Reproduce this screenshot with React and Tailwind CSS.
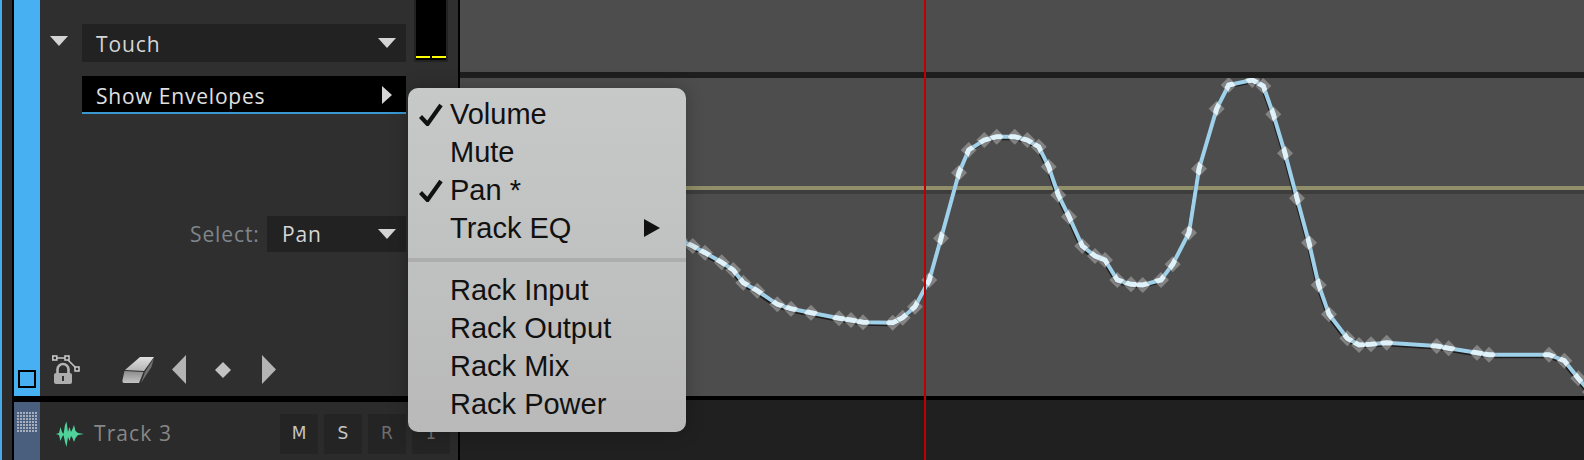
const uiFont = "font-['Open_Sans','Noto_Sans',sans-serif]";

// envelope points, in page pixels
const envelopePoints = [
    [680, 240], [692.7, 246], [705, 252.7], [721.7, 262.3], [733.3, 270], [743.3, 282.7], [757.3, 290.7],
    [777.3, 304.3], [791, 308.7], [811, 312.7], [839, 318.3], [851, 320], [863, 322.3], [892.7, 322.7],
    [902.7, 317.7], [915, 306.7], [929.3, 280], [941, 238.3], [959, 172.7], [968.7, 150], [984.3, 140],
    [996.7, 136.7], [1014.7, 136.7], [1027.3, 140], [1038.7, 146.7], [1048.7, 166.7], [1058.3, 195],
    [1069, 216.7], [1082.3, 246], [1095, 256], [1105, 260], [1117.3, 280], [1131, 284.3], [1142.7, 285],
    [1161, 280], [1172.7, 264.3], [1189, 232.7], [1199, 168.7], [1216.7, 108.7], [1228.7, 85], [1252.3, 80],
    [1263.3, 86], [1273.3, 114.3], [1285, 153.3], [1297, 198.3], [1309, 242.7], [1318.7, 285], [1329, 314.3],
    [1347.3, 338.3], [1359, 345], [1371, 344.3], [1386.7, 342.7], [1436.7, 346], [1448.7, 348.3], [1477, 352.7],
    [1489, 354.7], [1549, 354.7], [1564.3, 360.7], [1578.3, 378.3], [1590, 392],
];

const line = envelopePoints.map((p) => p.join(",")).join(" ");
const diamond = ([x, y], r) => `${x - r},${y} ${x},${y - r} ${x + r},${y} ${x},${y + r}`;

function Envelope() {
    return (
        <svg viewBox="460 78 1124 318" className="absolute inset-0 w-full h-full">
            <defs>
                <clipPath id="inner">
                    {envelopePoints.map((p, i) => (
                        <polygon key={i} points={diamond(p, 7)} />
                    ))}
                </clipPath>
            </defs>
            <rect x="460" y="186" width="1124" height="4" fill="#908f69" />
            <rect x="460" y="190" width="1124" height="4" fill="#3d3d3d" />
            <polyline points={line} transform="translate(-1 2)" fill="none" stroke="#1d1d1d" strokeWidth="3" />
            <polyline points={line} fill="none" stroke="#9fd1ea" strokeWidth="4" />
            {envelopePoints.map((p, i) => (
                <polygon key={i} points={diamond(p, 8)} fill="#a8a8a8" fillOpacity="0.6" />
            ))}
            <polyline points={line} clipPath="url(#inner)" fill="none" stroke="#dff1f9" strokeWidth="5" />
        </svg>
    );
}

function TriDown({ className = "" }) {
    return (
        <svg viewBox="0 0 18 10" className={"w-[18px] h-[10px] " + className}>
            <polygon points="0,0 18,0 9,10" fill="#d4d4d4" />
        </svg>
    );
}

function MenuRow({ label, checked, sub }) {
    return (
        <div className="flex items-center h-[38px] relative pl-[42px]">
            {checked && (
                <svg viewBox="0 0 24 23" className="absolute left-[11px] top-[8px] w-[24px] h-[23px]">
                    <path d="M1.5 13.5 L8.5 21 L22 2" fill="none" stroke="#111" strokeWidth="4.2" />
                </svg>
            )}
            <span>{label}</span>
            {sub && (
                <svg viewBox="0 0 16 18" className="absolute left-[236px] top-[10px] w-[16px] h-[18px]">
                    <polygon points="0,0 16,9 0,18" fill="#111" />
                </svg>
            )}
        </div>
    );
}

function PopupMenu() {
    return (
        <div className="absolute left-[408px] top-[88px] w-[278px] h-[344px] rounded-[10px] bg-gradient-to-b from-[#c7c9c9] to-[#b9b9b9] shadow-[0_0_18px_rgba(0,0,0,0.25)] pt-[7px] text-[#111] text-[29px] font-['Liberation_Sans',sans-serif] leading-none">
            <MenuRow label="Volume" checked />
            <MenuRow label="Mute" />
            <MenuRow label="Pan *" checked />
            <MenuRow label="Track EQ" sub />
            <div className="h-[4px] bg-[#adadad] mt-[11px] mb-[9px]" />
            <MenuRow label="Rack Input" />
            <MenuRow label="Rack Output" />
            <MenuRow label="Rack Mix" />
            <MenuRow label="Rack Power" />
        </div>
    );
}

function LockIcon() {
    return (
        <svg viewBox="52 355 28 29" className="w-[28px] h-[29px]">
            <path d="M56 358 H66 L76 368" fill="none" stroke="#c4c4c4" strokeWidth="1.5" />
            <g fill="#2f2f2f" stroke="#c4c4c4" strokeWidth="1.6">
                <rect x="52.8" y="356" width="4" height="4" />
                <rect x="65" y="356" width="4" height="4" />
                <rect x="75" y="367" width="4" height="4" />
            </g>
            <path d="M57.5 374 V369.5 A5.5 5.5 0 0 1 68.5 369.5 V374" fill="none" stroke="#b4b4b4" strokeWidth="2.6" />
            <rect x="54" y="373" width="18" height="11" rx="2" fill="#adadad" />
            <rect x="62" y="376" width="2" height="5" fill="#333" />
        </svg>
    );
}

function EraserIcon() {
    return (
        <svg viewBox="122 357 32 27" className="w-[32px] h-[27px]">
            <defs>
                <linearGradient id="eraserTop" x1="0" y1="0" x2="0" y2="1">
                    <stop offset="0" stopColor="#e0e0e0" />
                    <stop offset="1" stopColor="#b4b4b4" />
                </linearGradient>
                <linearGradient id="eraserFront" x1="0" y1="0" x2="0" y2="1">
                    <stop offset="0" stopColor="#8c8c8c" />
                    <stop offset="1" stopColor="#c4c4c4" />
                </linearGradient>
            </defs>
            <polygon points="125,371 140,358 154,358 144,372" fill="url(#eraserTop)" />
            <path d="M124.5 372 L143.5 373 L139 384 H124 Q122 384 122.5 381 Z" fill="url(#eraserFront)" />
            <polygon points="145,373 154,359 151.5,368 141,384" fill="#6f6f6f" />
        </svg>
    );
}

function Stepper() {
    return (
        <div className="flex items-center">
            <svg viewBox="0 0 14 29" className="w-[14px] h-[29px] ml-[18px]">
                <polygon points="14,0 14,29 0,14.5" fill="#b4b4b4" />
            </svg>
            <svg viewBox="0 0 16 16" className="w-[16px] h-[16px] ml-[29px]">
                <polygon points="8,0 16,8 8,16 0,8" fill="#c2c2c2" />
            </svg>
            <svg viewBox="0 0 14 29" className="w-[14px] h-[29px] ml-[31px]">
                <polygon points="0,0 14,14.5 0,29" fill="#b4b4b4" />
            </svg>
        </div>
    );
}

function WaveIcon() {
    return (
        <svg viewBox="56 420 28 26" className="w-[28px] h-[26px]">
            <path
                d="M56 433 L59 432 L60.5 426 L62 431 L63.5 433 L65 424 L66.5 420.5 L68 431 L69.5 426 L71 431 L72.5 428 L74 424 L75.5 430 L78 432 L84 433 L78 434 L75.5 437 L74 441 L72.5 437 L71 435 L69.5 440 L68 436 L66.5 446 L65 441 L63.5 434 L62 436 L60.5 440 L59 434 Z"
                fill="#4fd39b"
            />
        </svg>
    );
}

function TrackButton({ label, className }) {
    return (
        <div className={"w-[38px] h-[40px] bg-[#242424] flex items-center justify-center text-[17px] " + className}>
            {label}
        </div>
    );
}

export default function App() {
    return (
        <div className="relative flex w-[1584px] h-[460px] overflow-hidden bg-[#222]">
            <div className="w-[2px] bg-[#45aaea]" />
            <div className="w-[10px] bg-[#2b2b2b]" />
            <div className="w-[2px] bg-black" />

            {/* track headers */}
            <div className="w-[444px] flex flex-col">
                <div className="h-[396px] flex">
                    <div className="w-[26px] bg-[#47b0f2] flex items-end pb-[8px] pl-[4px]">
                        <div className="w-[18px] h-[18px] border-2 border-black" />
                    </div>
                    <div className={"flex-1 bg-[#2f2f2f] flex flex-col text-[#d6d6d6] text-[21px] tracking-[0.9px] " + uiFont}>
                        <div className="flex items-end h-[62px]">
                            <div className="w-[42px] h-[38px] flex items-center pl-[10px] pb-[4px]">
                                <TriDown />
                            </div>
                            <div className="w-[324px] h-[38px] bg-[#222] flex items-center justify-between pl-[14px] pr-[10px]">
                                <span className="pt-[3px]">Touch</span>
                                <TriDown />
                            </div>
                            <div className="ml-[8px] w-[34px] h-[62px] bg-[#222] px-[2px] pb-[2px] flex flex-col">
                                <div className="flex-1 bg-black flex items-end gap-[2px] pb-[2px]">
                                    <div className="flex-1 h-[2px] bg-[#ffff00]" />
                                    <div className="flex-1 h-[2px] bg-[#ffff00]" />
                                </div>
                            </div>
                        </div>
                        <div className="ml-[42px] mt-[14px] w-[324px] h-[38px] bg-black border-b-2 border-[#3a97cf] flex items-center justify-between pl-[14px] pr-[14px] text-[#e0e0e0]">
                            <span className="pt-[5px] tracking-[0.8px]">Show Envelopes</span>
                            <svg viewBox="0 0 10 18" className="w-[10px] h-[18px] mt-[1px]">
                                <polygon points="0,0 10,9 0,18" fill="#d4d4d4" />
                            </svg>
                        </div>
                        <div className="mt-[102px] ml-[150px] flex items-center h-[36px]">
                            <span className="w-[77px] pt-[1px] text-[#7f868c]">Select:</span>
                            <div className="w-[139px] h-[36px] bg-[#222] flex items-center justify-between pl-[15px] pr-[10px]">
                                <span className="pt-[1px]">Pan</span>
                                <TriDown />
                            </div>
                        </div>
                        <div className="mt-[103px] ml-[12px] flex items-center">
                            <LockIcon />
                            <div className="ml-[42px]">
                                <EraserIcon />
                            </div>
                            <Stepper />
                        </div>
                    </div>
                </div>
                <div className="h-[6px] bg-black" />
                <div className="flex-1 flex">
                    <div className="w-[26px] bg-[#4a5f7d] pl-[3px] pt-[10px]">
                        <svg width="20" height="21">
                            <defs>
                                <pattern id="dots" width="3" height="3" patternUnits="userSpaceOnUse">
                                    <rect width="2" height="2" fill="#a7afbf" />
                                </pattern>
                            </defs>
                            <rect width="20" height="21" fill="url(#dots)" />
                        </svg>
                    </div>
                    <div className="flex-1 bg-[#2b2b2b] flex items-center pl-[16px] pt-[6px]">
                        <WaveIcon />
                        <span className={"ml-[10px] w-[186px] text-[21px] tracking-[1.1px] text-[#878787] " + uiFont}>Track 3</span>
                        <div className="flex gap-[6px]">
                            <TrackButton label="M" className="font-['DejaVu_Sans',sans-serif] text-[#c4c4c4]" />
                            <TrackButton label="S" className="font-['DejaVu_Sans',sans-serif] text-[#c4c4c4]" />
                            <TrackButton label="R" className="font-['DejaVu_Sans',sans-serif] text-[#6e6e6e]" />
                            <TrackButton label="I" className="font-['DejaVu_Sans_Mono',monospace] text-[#6e6e6e]" />
                        </div>
                    </div>
                </div>
            </div>

            <div className="w-[2px] bg-black" />

            {/* lanes */}
            <div className="flex-1 flex flex-col">
                <div className="h-[72px] bg-[#4d4d4d]" />
                <div className="h-[6px] bg-[#1e1e1e]" />
                <div className="h-[318px] bg-[#4d4d4d] relative overflow-hidden">
                    <Envelope />
                </div>
                <div className="h-[4px] bg-black" />
                <div className="flex-1 bg-[#202020]" />
            </div>

            {/* playhead */}
            <div className="absolute left-[924px] top-0 w-[2px] h-full bg-[#c00000]" />
            <PopupMenu />
        </div>
    );
}
